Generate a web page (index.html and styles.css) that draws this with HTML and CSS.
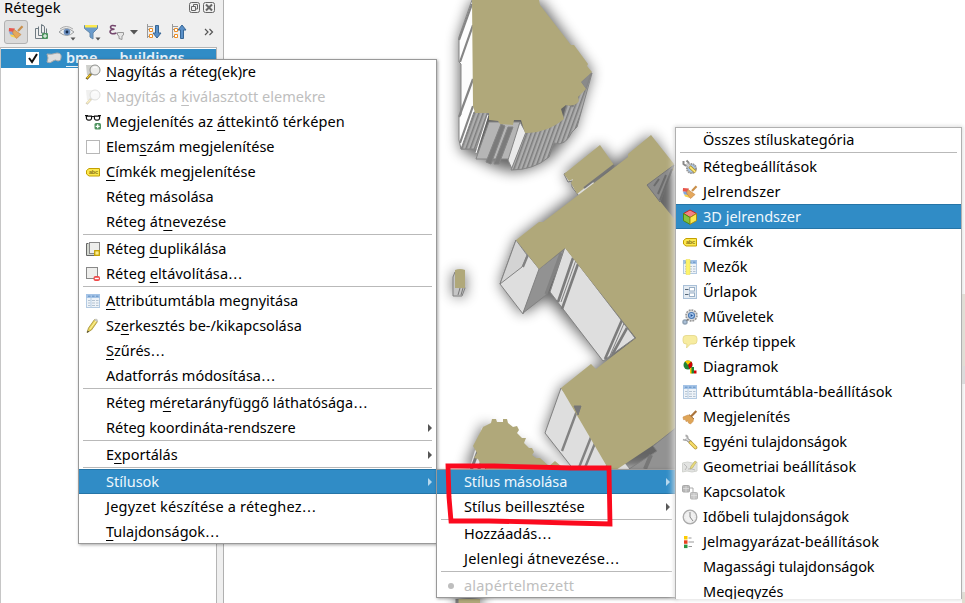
FILE: index.html
```
<!DOCTYPE html>
<html lang="hu">
<head>
<meta charset="utf-8">
<title>Rétegek</title>
<link rel="stylesheet" href="styles.css">
</head>
<body>
<svg class="defs" width="0" height="0" aria-hidden="true">
  <symbol id="i-zoom" viewBox="0 0 16 16"><path d="M1 1h8v10H2z" fill="#cfd0cc"/><path d="M6 10L1.500 15" stroke="#5b4a17" stroke-width="2.600"/><path d="M5.500 10.500L1.800 14.300" stroke="#f2c92e" stroke-width="1.500"/><circle cx="10" cy="6" r="5" fill="#eeeeec" stroke="#8d8f8c"/><path d="M8 4q2-2 4 0" stroke="#fff" fill="none"/></symbol>
  <symbol id="i-glasses" viewBox="0 0 16 16"><path d="M0 1.700h3M13 1.700h3M6 2.500h4" stroke="#111" stroke-width="1.200"/><path d="M1.500 2.200h5q.8 4-2.500 4t-2.500-4zM9.500 2.200h5q.8 4-2.500 4t-2.500-4z" fill="#fff" stroke="#111" stroke-width="1.200"/><rect x="9.500" y="9" width="6.500" height="6.500" rx="1.500" fill="#4f9460"/><path d="M12.700 10.300v4M10.700 12.300h4" stroke="#fff" stroke-width="1.300"/></symbol>
  <symbol id="i-box" viewBox="0 0 16 16"><rect x="1.500" y="1.500" width="13" height="13" fill="#fff" stroke="#b7b7b7"/></symbol>
  <symbol id="i-abc" viewBox="0 0 16 16"><path d="M4 4.500h10.500v7.500H4L1.500 10V6.500z" fill="#fce94f" stroke="#c4a000"/><text x="4" y="10" font-family="Liberation Sans" font-size="5.500" font-weight="bold" fill="#8a7416" textLength="9">abc</text></symbol>
  <symbol id="i-copy" viewBox="0 0 16 16"><path d="M3.500 2.500h-2v12h10V13" fill="#d3d7cf" stroke="#666"/><rect x="4.500" y="1.500" width="10" height="11" fill="#eeeeec" stroke="#888"/><rect x="9.700" y="9.700" width="4.600" height="4.600" fill="#fcef8f" stroke="#c4a000" stroke-width="1.300"/></symbol>
  <symbol id="i-remove" viewBox="0 0 16 16"><rect x="1.500" y="1.500" width="11" height="11" fill="#eeeeec" stroke="#888"/><rect x="8.500" y="10" width="6.500" height="5" rx="2" fill="#ef4949"/><path d="M9.800 12.500h4" stroke="#fff" stroke-width="1.400"/></symbol>
  <symbol id="i-table" viewBox="0 0 16 16"><rect x="1.500" y="1.500" width="13" height="13" fill="#eef3f8" stroke="#b3cae2"/><path d="M1 1h14v4H1z" fill="#a4c3e6"/><path d="M3 3.200h2.500M7 3.200h2.500M11 3.200h2.500" stroke="#6292c4"/><path d="M3 7.500h2.500M7 7.500h3M11 7.500h2.500M3 10h2.500M7 10h3M11 10h2.500M3 12.500h2.500M7 12.500h3M11 12.500h2.500" stroke="#b5c3d1"/><path d="M6 5v10" stroke="#b8cee4"/></symbol>
  <symbol id="i-pencil" viewBox="0 0 16 16"><path d="M2 14.500L3.500 10 9.500 1.500 12.500 3.500 6.500 12z" fill="#e9d55c" stroke="#a08c36" stroke-width=".8"/><path d="M5 11L11 2.800" stroke="#fff5a0"/><path d="M9 2l3.500 2.300L13 2 11 .5z" fill="#c8c8c0"/><path d="M2 14.700l.7-2 1.500 1z" fill="#333"/></symbol>
  <symbol id="i-tools" viewBox="0 0 16 16"><circle cx="9.500" cy="9.500" r="4.500" fill="#a8c6e8" stroke="#999" stroke-width="2" stroke-dasharray="1.600 .6"/><path d="M1.500 2v3l2 1.500 2.500-.5.500-2.500-2-2" fill="none" stroke="#888" stroke-width="2"/><path d="M4.500 4.500L8 8" stroke="#ccc" stroke-width="2.500"/><path d="M7.500 7.500l6 5.500" stroke="#ad8c2d" stroke-width="3.400"/><path d="M8 8l5.300 4.800" stroke="#fce977" stroke-width="1.800"/></symbol>
  <symbol id="i-brush" viewBox="0 0 16 16"><path d="M1 4l6 .5L5 8 .8 7.500z" fill="#e8564c"/><path d="M1 7.500l5 .5v3.500L2 10.500z" fill="#7ea6e0"/><path d="M2 10.500l5 .5 1 3-5-1.500z" fill="#f6d24e"/><path d="M10 7L14.500 2.200" stroke="#c98f4a" stroke-width="2.200"/><path d="M6 5.500L13 10.500 11.500 12 8.500 14.500 4.500 9z" fill="#e5a85c" stroke="#bf8040" stroke-width=".6"/></symbol>
  <symbol id="i-cube" viewBox="0 0 16 16"><path d="M8 1l6.500 3.500L8 8.500 1.500 4.500z" fill="#f38484" stroke="#c32525"/><path d="M1.500 4.500L8 8.500v6.800l-6.500-3.600z" fill="#86c440" stroke="#4e8b10"/><path d="M14.500 4.500L8 8.500v6.800l6.500-3.600z" fill="#fce94f" stroke="#a28c16"/></symbol>
  <symbol id="i-fields" viewBox="0 0 16 16"><use href="#i-table"/><path d="M4 .5h4v15H4z" fill="#fcf36c" stroke="#eee05c" stroke-width=".6"/></symbol>
  <symbol id="i-form" viewBox="0 0 16 16"><rect x="1.500" y="1.500" width="13" height="13" fill="#e4ebf2" stroke="#a9c0d8"/><path d="M3 5.500h3.500M3 10.500h3.500" stroke="#567" stroke-width="1.100"/><rect x="7.500" y="3.500" width="5" height="3.500" fill="#fff" stroke="#9ab0c6"/><rect x="7.500" y="9" width="5" height="3.500" fill="#fff" stroke="#9ab0c6"/></symbol>
  <symbol id="i-gear" viewBox="0 0 16 16"><circle cx="9.500" cy="6.500" r="5.300" fill="#ddd" stroke="#999" stroke-width="2" stroke-dasharray="1.800 .9"/><circle cx="9.500" cy="6.500" r="4.500" fill="#dcdcdc"/><circle cx="9.500" cy="6.500" r="3" fill="#a8caf0" stroke="#4c7ab4" stroke-width="1.200"/><path d="M8.600 5l2.500 1.500-2.500 1.500z" fill="#1d4c8f"/><circle cx="3" cy="13" r="2" fill="#aac0d8" stroke="#8fa2b5" stroke-width="1.500"/><path d="M4.500 11.500l1.500-1" stroke="#777" stroke-width="1.500"/></symbol>
  <symbol id="i-tip" viewBox="0 0 16 16"><path d="M4 1.500h8q3 0 3 3v2.500q0 3-3 3H8.500L4.500 14l.5-4H4q-3 0-3-3V4.500q0-3 3-3z" fill="#f7eca0" stroke="#e3d587" stroke-width=".8"/></symbol>
  <symbol id="i-diagram" viewBox="0 0 16 16"><circle cx="6" cy="6" r="4.500" fill="#218335"/><path d="M6 6L3 2.300Q6 .5 9 2.500z" fill="#fcca00"/><path d="M6 6l3.500-3.500q2.500 4-2 7.500z" fill="#d40000"/><path d="M8 9h2.500v5.500H8z" fill="#fcca00"/><path d="M9.500 8h2.500v6.500H9.500z" fill="#218335"/><path d="M12 11.500h2.500v3H12z" fill="#d40000"/></symbol>
  <symbol id="i-broom" viewBox="0 0 16 16"><path d="M9 7.500L14.300 2" stroke="#a9733a" stroke-width="2.200"/><path d="M1 8l5-2 2 .5L11.500 10l-.5 2.500L8.500 15 6.500 14l-.5-2-2 .5-.5-2-2 .2z" fill="#dfa557" stroke="#c98d4a" stroke-width=".6"/><path d="M7 5.500l5 4.500" stroke="#a9733a"/></symbol>
  <symbol id="i-wrench" viewBox="0 0 16 16"><path d="M4 4.500l5 4" stroke="#8a8a8a" stroke-width="3.300"/><path d="M3.500 1.500q2.800.5 2 3T1 5.500" stroke="#aaa" stroke-width="1.800" fill="none"/><path d="M4 4.500l5 4" stroke="#ddd" stroke-width="1.600"/><path d="M8.500 8.500l5 5" stroke="#b49633" stroke-width="3.600" stroke-linecap="round"/><path d="M8.500 8.500l5 5" stroke="#f6dd69" stroke-width="2.200" stroke-linecap="round"/></symbol>
  <symbol id="i-geom" viewBox="0 0 16 16"><path d="M.5 4l5-1 5 1 4.500-1v9l-5 1-5-1-4.500 1z" fill="#e2e3e1" stroke="#d2d4d0"/><path d="M2 5l3 3-2 3M6 10h4l3 1" stroke="#bbb" fill="none"/><path d="M8 10l1-3 4-5 1.500 1-4 6z" fill="#eadb7a" stroke="#a9a060" stroke-width=".5"/></symbol>
  <symbol id="i-rel" viewBox="0 0 16 16"><rect x=".5" y="1.500" width="7" height="6.500" rx="1" fill="#b9b9b9" stroke="#a9a9a9"/><rect x="8.500" y="8.500" width="7" height="6.500" rx="1" fill="#c7c7c7" stroke="#b4b4b4"/><path d="M1 4.500h6M9 11.500h6M4 2v6M12 9v6" stroke="#e2e2e2" stroke-width=".7"/><path d="M8 4h3v4" fill="none" stroke="#aaa"/></symbol>
  <symbol id="i-clock" viewBox="0 0 16 16"><circle cx="8" cy="8" r="6.800" fill="#f1f1f1" stroke="#aaa" stroke-width="1.300"/><path d="M8 3v5l3 4" stroke="#888" fill="none"/><circle cx="8" cy="8" r="5.300" stroke="#ddd" fill="none" stroke-dasharray="1 1.775"/></symbol>
  <symbol id="i-legend" viewBox="0 0 16 16"><path d="M2 2h3.500v3.500H2z" fill="#fcca00"/><path d="M2 6.300h3.500v3.500H2z" fill="#e8401e"/><path d="M2 10.600h3.500v3.500H2z" fill="#2b9442"/><path d="M6.500 4h3M6.500 8H12M6.500 12.500H10" stroke="#999"/></symbol>
</svg>

<main class="window">
  <section class="dock">
    <header class="dock-title"><h1>Rétegek</h1>
      <svg width="27" height="13" viewBox="0 0 27 13" fill="none" stroke="#666"><rect x=".5" y="1.500" width="10" height="10" rx="2"/><path d="M4.500 5V3.500h4V8H7M2.500 5.500h4v4h-4z"/><rect x="14.500" y="1.500" width="11" height="10" rx="2"/><path d="M17 3.500l6 6M23 3.500l-6 6" stroke-width="2"/></svg>
    </header>
    <div class="toolbar">
      <span class="tool pressed"><svg width="16" height="16"><use href="#i-brush"/></svg></span>
      <svg class="strip" width="190" height="24" viewBox="28 20 190 24">
        <path d="M38.500 28.500h-3v10h9M38.500 26.500v9h8v-7M41.500 25.500h2M41.500 33V24.500l3 2V33z" fill="none" stroke="#6f7b82"/><rect x="42" y="33" width="6" height="6" rx="1" fill="#4f9460"/><path d="M45 34v4M43 36h4" stroke="#fff"/>
        <path d="M59 32q7-7 15 0-7 7-15 0z" fill="#eeefef" stroke="#9b9ea0"/><path d="M60 29q6-5 13 0" fill="none" stroke="#aaa"/><circle cx="67" cy="32" r="3.300" fill="#6c90c0"/><circle cx="67" cy="32" r="1.400" fill="#172c49"/><path d="M70.500 37.500h5l-2.500 3z" fill="#555"/>
        <path d="M84.500 25.500h13v3L93 33v6l-3-2v-4l-5.500-4.500z" fill="#6a9bcc" stroke="#6388aa"/><path d="M85 25h12v2.500H85z" fill="#fce94f"/><path d="M95.500 37.500h5l-2.500 3z" fill="#555"/>
        <path d="M116 26q-5-1.500-5.500 1 0 2 4 2.300-4.500.2-4.500 2.700 1 3 6.500 1" fill="none" stroke="#74476d" stroke-width="1.600"/><path d="M117.500 32.500h6v2.500l-1.500 1v3.500l-3-1V36l-1.500-1z" fill="#e6e6e6" stroke="#999"/>
        <path d="M130 30h8l-4 4.500z" fill="#555"/>
        <g id="ex"><path d="M147.500 24v14M148 29.500h3M148 36.500h3" stroke="#999" fill="none"/><path d="M149.500 28.500h3v3h-3zM149.500 34.500h3v3h-3z" fill="#fff" stroke="#ec8e26"/><path d="M148 26.500h5" stroke="#999"/></g>
        <path d="M155.500 25.500h3v7.500h2.500l-4 5-4-5h2.500z" fill="#5a90c8" stroke="#376695"/>
        <use href="#ex" x="25"/><path d="M180.500 38.500h3V30h2.500l-4-5-4 5h2.500z" fill="#5a90c8" stroke="#376695"/>
        <path d="M205 29l3 3-3 3M209.500 29l3 3-3 3" fill="none" stroke="#555" stroke-width="1.200"/>
      </svg>
    </div>
    <div class="tree"><div class="layer">
      <svg width="32" height="17" viewBox="0 0 32 17"><path d="M0 2h13v13H0z" fill="#fff"/><path d="M3 8l3 4 5-8" fill="none" stroke="#111" stroke-width="2"/><path d="M21 4q4 1 10-1 5 0 4 5 0 3-3 3-3-2-5 0-3 3-6 1 2-4 0-8z" fill="#dedede" stroke="#aaa"/></svg>
      <b>bme — buildings</b></div></div>
  </section>

  <section class="map">
    <svg width="741" height="603" viewBox="224 0 741 603">
      <defs>
        <filter id="sh" x="-30%" y="-30%" width="160%" height="160%"><feGaussianBlur stdDeviation="7"/></filter>
        <pattern id="ribs" width="4" height="20" patternUnits="userSpaceOnUse" patternTransform="rotate(20)"><rect width="4" height="20" fill="#adadad"/><rect width="1.500" height="20" fill="#7c7c7c"/></pattern>
        <pattern id="ribs2" width="7" height="20" patternUnits="userSpaceOnUse" patternTransform="rotate(20)"><rect width="7" height="20" fill="#e2e2e2"/><rect width="3" height="20" fill="#777"/></pattern>
      </defs>
      <g filter="url(#sh)" fill="#000" opacity=".6">
        <path d="M472 0L459 38V118L460 150 475 157 492 166 512 172Q536 169 552 157L574 131 592 72 540 0z"/>
        <path d="M564 174L600 145 614 164 580 196zM516 240L500 284 522 314 547 298 603 360 640 340 561 388 545 433 577 470H676V172L651 135z"/>
        <path d="M453 272h12v24H453zM483 424L465 470H560z"/><path d="M457 590h24v20h-24z"/>
      </g>
      <g stroke="#858585">
        <path d="M472 0L459 37V62L461 64V115L459 117V140L461 149H477L488 112 473 0z" fill="#fdfdfd"/>
        <path d="M472 4L459 40M473 25L460 62M473 79L459 117M473 106L460 143" stroke-width="2.200" fill="none"/>
        <path d="M474 112h15L476 149H461z" fill="url(#ribs)"/>
        <path d="M489 122h31l-10 37h-34z" fill="#b5b5b5"/><path d="M488 115L476 153" stroke="#fff"/>
        <path d="M501 124l-15 38 5 2 14-38z" fill="#7b7b7b"/><path d="M508 127l-14 37 5 0 14-37z" fill="#7b7b7b"/>
        <path d="M520 122l6 11-14 36-4-9z" fill="#eaeaea"/>
        <path d="M526 132q20 0 37-13l4-15 6 3 14-34 5 0-15 54-5 5q-7 15-18 11l-5 14q-15 13-38 13z" fill="url(#ribs)"/>
        <path d="M591 73l-10 9 5 7z" fill="#8a8a8a"/>
      </g>
      <path d="M472 0h67l1 5 31 40h3l14 19-1 2 5 6-11 10 5 7-8 8 1 4q-4 6-13 4l-5 4 3 10q-17 14-39 14l-4-13h-7l-1 5-13-1-2-3-9-1V113h-14l-2-7z" fill="#b0a87a"/>
      <path d="M564 174l4 8 4-1v6l7 9 17-10-12-22z" fill="#ddd" stroke="#777"/>
      <path d="M564 174L600 145l14 20-32 25-5 4-6-11 2-4-4 2z" fill="#b0a87a"/><path d="M584 188l30-23" stroke="#777" stroke-width="2"/>
      <g stroke="#828282">
        <path d="M516 240l24 30-17 44-23-30z" fill="#dedede"/><path d="M516 240l11 15-5 12-22 17z" fill="#d3d3d3"/><path d="M528 255l-5 12" stroke-width="2"/>
        <path d="M539 269l27-21-20 47-23 18z" fill="#929292"/><path d="M561 253l-15 41" stroke-width="3"/>
        <path d="M565 247L635 338 603 361 550 292z" fill="#dedede"/>
        <g fill="none" stroke="#7c7c7c" stroke-width="2.600"><path d="M573 258l-15 44M576 259l-1 0M578 264l-16 45M622 320l-17 39M627 328l-15 27"/></g><path d="M576 260l-15 42M625 321l-16 37" fill="none"/>
        <path d="M561 388l70 82h-57l-29-37z" fill="#dedede"/>
        <path d="M578 408l-16 43M595 427l-17 43M600 431l-16 39M613 451l-8 20" fill="none" stroke-width="2.400"/>
      </g>
      <path d="M516 240l23-18 4 0 85-65v-3l23-19 23 29v6l-27 15 29 36V430l-60 40h-7L561 388l30-24 5 5 40-31L565 248l-26 21z" fill="#b0a87a"/>
      <path d="M674 165l-27 20 13 17z" fill="#8b8b8b" stroke="#777"/><path d="M654 186l5-7M658 194l8-19M660 200l12-31" stroke="#6c6c6c" stroke-width="2"/>
      <path d="M653 446l24-19v44h-51l31-20z" fill="#929292" stroke="#7f7f7f"/><path d="M651 455l-6 14" stroke="#777" stroke-width="4"/>
      <path d="M574 406h7l-3 9z" fill="#777" stroke="#777"/>
      <path d="M455 272l-2 5v19h9l3-8z" fill="#c5c5c5" stroke="#808080"/><path d="M458 295l2-7M461 295l2-7" stroke="#777"/><path d="M455 270q5-2 10 0v18H455z" fill="#b0a87a"/>
      <path d="M482 427l-13 43h26l12-20z" fill="url(#ribs2)"/>
      <path d="M483 427l8-4 1-4h4l1 3h6v-3h4l1 4 5 4 4-1 2 4-2 3 5 5 4 0-2 5 5 5 3 0 2 4-2 3 4 3h4l9 8 6-5 6 5v8h-76l1-6-4-1-4-8-4-1 3-5-4-7z" fill="#b0a87a"/>
      <path d="M458 599h22v4h-22z" fill="#b0a87a"/><path d="M457 599v4" stroke="#777" stroke-width="3"/>
      <path d="M962 294h3v72h-3zM962 592h3v11h-3z" fill="#dedaca"/><path d="M962 366h3v18h-3z" fill="#d4d4d4"/>
    </svg>
  </section>
</main>

<nav class="menu main-menu">
  <a><svg><use href="#i-zoom"/></svg><span><u>N</u>agyítás a réteg(ek)re</span></a>
  <a class="off"><svg><use href="#i-zoom"/></svg><span>Nagyítás a <u>k</u>iválasztott elemekre</span></a>
  <a><svg><use href="#i-glasses"/></svg><span class="w1">Megjelenítés az <u>á</u>ttekintő térképen</span></a>
  <a><svg><use href="#i-box"/></svg><span>Elem<u>s</u>zám megjelenítése</span></a>
  <a><svg><use href="#i-abc"/></svg><span><u>C</u>ímkék megjelenítése</span></a>
  <a><i></i><span>Réteg másolása</span></a>
  <a><i></i><span class="w1">Réteg át<u>n</u>evezése</span></a>
  <hr>
  <a><svg><use href="#i-copy"/></svg><span>Réteg <u>d</u>uplikálása</span></a>
  <a><svg><use href="#i-remove"/></svg><span class="w1">Réteg <u>e</u>ltávolítása<em>…</em></span></a>
  <hr>
  <a><svg><use href="#i-table"/></svg><span><u>A</u>ttribútumtábla megnyitása</span></a>
  <a><svg><use href="#i-pencil"/></svg><span>Sz<u>e</u>rkesztés be-/kikapcsolása</span></a>
  <a><i></i><span><u>S</u>zűrés<em>…</em></span></a>
  <a><i></i><span>Adatforrás módosítása<em>…</em></span></a>
  <hr>
  <a><i></i><span>Réteg m<u>é</u>retarányfüggő láthatósága<em>…</em></span></a>
  <a class="sub"><i></i><span>Réteg koordináta-rendszere</span></a>
  <hr>
  <a class="sub"><i></i><span>E<u>x</u>portálás</span></a>
  <hr>
  <a class="sub on"><i></i><span>Stílusok</span></a>
  <a><i></i><span class="w2">Jegyzet készítése a réteghez<em>…</em></span></a>
  <a><i></i><span><u>T</u>ulajdonságok<em>…</em></span></a>
</nav>

<nav class="menu style-menu">
  <a class="sub on"><i></i><span class="n1">Stílus másolása</span></a>
  <a class="sub"><i></i><span class="w1">Stílus beillesztése</span></a>
  <hr>
  <a><i></i><span>Hozzáadás<em>…</em></span></a>
  <a><i></i><span class="w2">Jelenlegi átnevezése<em>…</em></span></a>
  <hr>
  <a class="off"><i class="dot"></i><span class="w2">alapértelmezett</span></a>
</nav>

<nav class="menu category-menu">
  <a><i></i><span>Összes stíluskategória</span></a>
  <hr>
  <a><svg><use href="#i-tools"/></svg><span class="w1">Rétegbeállítások</span></a>
  <a><svg><use href="#i-brush"/></svg><span class="w2">Jelrendszer</span></a>
  <a class="on"><svg><use href="#i-cube"/></svg><span>3D jelrendszer</span></a>
  <a><svg><use href="#i-abc"/></svg><span>Címkék</span></a>
  <a><svg><use href="#i-fields"/></svg><span>Mezők</span></a>
  <a><svg><use href="#i-form"/></svg><span>Űrlapok</span></a>
  <a><svg><use href="#i-gear"/></svg><span>Műveletek</span></a>
  <a><svg><use href="#i-tip"/></svg><span>Térkép tippek</span></a>
  <a><svg><use href="#i-diagram"/></svg><span>Diagramok</span></a>
  <a><svg><use href="#i-table"/></svg><span class="w1">Attribútumtábla-beállítások</span></a>
  <a><svg><use href="#i-broom"/></svg><span>Megjelenítés</span></a>
  <a><svg><use href="#i-wrench"/></svg><span class="n1">Egyéni tulajdonságok</span></a>
  <a><svg><use href="#i-geom"/></svg><span>Geometriai beállítások</span></a>
  <a><svg><use href="#i-rel"/></svg><span>Kapcsolatok</span></a>
  <a><svg><use href="#i-clock"/></svg><span class="n1">Időbeli tulajdonságok</span></a>
  <a><svg><use href="#i-legend"/></svg><span class="w1">Jelmagyarázat-beállítások</span></a>
  <a><i></i><span class="n1">Magassági tulajdonságok</span></a>
  <a><i></i><span>Megjegyzés</span></a>
</nav>

<svg class="marker" width="170" height="66" viewBox="444 462 170 66"><path d="M448 466L494 466 571 468H609L610 524 570 523 489 521H451L449 497z" fill="none" stroke="#fb0a1e" stroke-width="4.800"/></svg>
</body>
</html>
```
FILE: styles.css
```
* { box-sizing: border-box; }
body { margin: 0; width: 965px; height: 603px; overflow: hidden; position: relative; background: #fff; color: #000; font: 14.5px/25px "Noto Sans", sans-serif; }
.defs { position: absolute; }
.window { display: flex; height: 603px; }
.dock { width: 224px; flex: none; background: #efefef; border-right: 1px solid #b0b0b0; display: flex; flex-direction: column; }
.map { flex: 1; overflow: hidden; }
.map svg { display: block; }
.dock-title { height: 17px; display: flex; justify-content: space-between; padding: 0 7px 0 4px; }
.dock-title h1 { margin: 0; font-size: 14.8px; font-weight: 400; line-height: 15px; }
.dock-title svg { margin-top: 1px; }
.toolbar { height: 30px; display: flex; align-items: center; padding-left: 4px; }
.tool { width: 24px; height: 24px; display: flex; align-items: center; justify-content: center; }
.pressed { background: #dadada; border: 1px solid #b2b2b2; border-radius: 3px; }
.tree { flex: 1; margin-right: 6px; background: #fff; border: 1px solid #b5b5b5; border-bottom: 0; border-left-color: #c6c6c6; }
.layer { height: 19px; margin-top: 1px; padding-left: 23px; display: flex; align-items: center; background: #308cc6; color: #e6f1f9; line-height: 19px; }
.layer svg { width: 36px; height: 17px; flex: none; overflow: visible; }
.layer b { margin: -2px 0 0 6px; text-decoration: underline; text-underline-offset: 3px; text-decoration-thickness: 1px; font-weight: 600; white-space: nowrap; }

.menu { position: absolute; background: #fff; box-shadow: 1px 1px 3px rgba(0,0,0,.35); overflow: hidden; }
.menu::after { content: ""; position: absolute; inset: 0; border: 1px solid #999; }
.main-menu { left: 78px; top: 59px; width: 359px; height: 485px; }
.style-menu { left: 436px; top: 469px; width: 241px; height: 129px; }
.category-menu { left: 675px; top: 127px; width: 287px; height: 472px; box-shadow: 0 0 7px 1px rgba(255,255,255,.95), 0 0 4px rgba(0,0,0,.4); }
.category-menu::after { border-color: #b0b0b0; border-bottom: 0; }
.menu a { display: flex; align-items: center; height: 25px; padding: 0 5px 0 7px; white-space: nowrap; }
.menu a > svg, .menu a > i { width: 16px; height: 16px; margin-right: 5px; flex: none; }
.menu em { font-family: "DejaVu Sans", sans-serif; font-style: normal; line-height: 1; }
.w1 { letter-spacing: .08px; }
.w2 { letter-spacing: .2px; }
.n1 { letter-spacing: -.1px; }
.menu hr { height: 2px; margin: 0 5px; border: 0; border-top: 1px solid #b9b9b9; }
.menu u { text-underline-offset: 3px; text-decoration-thickness: 1px; text-decoration-skip-ink: none; }
.menu .off { color: #bebebe; }
.menu .off svg { opacity: .3; }
.menu .on { background: #308cc6; color: #eff7fc; box-shadow: inset 0 1px #2675a7, inset 0 -1px #2675a7; }
.sub::after { content: ""; margin-left: auto; border-left: 4px solid #555; border-top: 4px solid transparent; border-bottom: 4px solid transparent; }
.style-menu .sub { padding-right: 7px; }
.sub.on::after { border-left-color: #b6d8ed; }
.menu .dot { width: 6px; height: 6px; margin: 0 10px 0 5px; border-radius: 50%; background: #bebebe; }
.marker { position: absolute; left: 444px; top: 462px; }
```
